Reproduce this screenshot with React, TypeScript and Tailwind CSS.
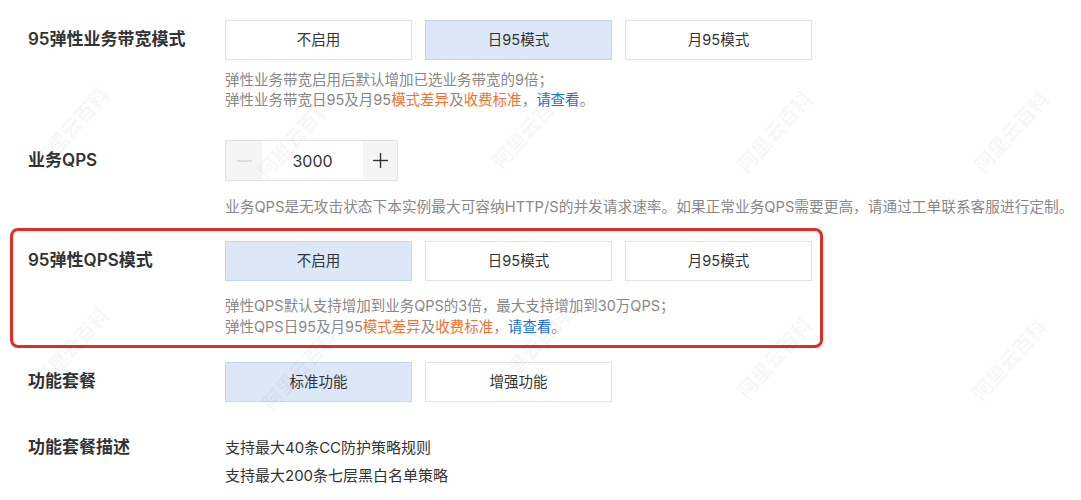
import type { ReactNode } from "react";

const WATERMARKS: [number, number][] = [
  [72, 128],
  [295, 138],
  [530, 128],
  [775, 132],
  [1012, 132],
  [72, 348],
  [300, 370],
  [532, 350],
  [775, 358],
  [1010, 360],
];

function Opt({ children, active }: { children: ReactNode; active?: boolean }) {
  return (
    <div
      className={
        active
          ? "h-10 w-[187px] flex items-center justify-center border border-[#c4d6ef] bg-[#dce8f7] text-[14.5px] text-[#333]"
          : "h-10 w-[187px] flex items-center justify-center border border-[#e3e3e3] bg-white text-[14.5px] text-[#333]"
      }
    >
      {children}
    </div>
  );
}

function Label({ children, tall }: { children: ReactNode; tall?: boolean }) {
  return (
    <div
      className={
        "w-[197px] shrink-0 flex items-center text-[17px] font-semibold text-[#333] " +
        (tall ? "h-[28px]" : "h-10")
      }
    >
      {children}
    </div>
  );
}

const Orange = ({ children }: { children: ReactNode }) => (
  <span className="text-[#ec7430]">{children}</span>
);
const Blue = ({ children }: { children: ReactNode }) => (
  <span className="text-[#1f72cc]">{children}</span>
);

export default function App() {
  return (
    <div className="relative w-[1081px] h-[500px] overflow-hidden bg-white font-['Inter','Noto_Sans_CJK_SC',sans-serif]">
      <div className="pt-[20px] pl-[10px]">
        {/* 带宽模式 */}
        <div className="flex pl-[18px]">
          <Label>95弹性业务带宽模式</Label>
          <div>
            <div className="flex gap-[13px]">
              <Opt>不启用</Opt>
              <Opt active>日95模式</Opt>
              <Opt>月95模式</Opt>
            </div>
            <div className="mt-[10px] text-[14.5px] leading-[20px] text-[#888]">
              <div>弹性业务带宽启用后默认增加已选业务带宽的9倍；</div>
              <div>
                弹性业务带宽日95及月95<Orange>模式差异</Orange>及<Orange>收费标准</Orange>，<Blue>请查看</Blue>。
              </div>
            </div>
          </div>
        </div>

        {/* 业务QPS */}
        <div className="flex pl-[18px] mt-[30px]">
          <div className="w-[197px] shrink-0 h-[41px] flex items-center text-[17px] font-semibold text-[#333]">
            业务QPS
          </div>
          <div>
            <div className="flex h-[41px] w-[173px] border border-[#e2e2e2]">
              <div className="w-[36px] bg-[#f5f5f5] flex items-center justify-center">
                <svg width="15" height="2" viewBox="0 0 15 2">
                  <line x1="0" y1="1" x2="15" y2="1" stroke="#cfcfcf" strokeWidth="1.3" />
                </svg>
              </div>
              <div className="flex-1 flex items-center justify-center text-[16px] text-[#333]">3000</div>
              <div className="w-[34px] bg-[#f5f5f5] flex items-center justify-center">
                <svg width="15" height="15" viewBox="0 0 15 15">
                  <line x1="0" y1="7.5" x2="15" y2="7.5" stroke="#333" strokeWidth="1.4" />
                  <line x1="7.5" y1="0" x2="7.5" y2="15" stroke="#333" strokeWidth="1.4" />
                </svg>
              </div>
            </div>
            <div className="mt-[16px] text-[14.7px] leading-[20px] text-[#888] whitespace-nowrap">
              业务QPS是无攻击状态下本实例最大可容纳HTTP/S的并发请求速率。如果正常业务QPS需要更高，请通过工单联系客服进行定制。
            </div>
          </div>
        </div>

        {/* 95弹性QPS模式 (highlighted) */}
        <div className="mt-[11px] w-[813px] border-[3px] border-[#d9302a] rounded-[8px] pt-[10px] pb-[8px] pl-[15px] flex">
          <Label>95弹性QPS模式</Label>
          <div>
            <div className="flex gap-[13px]">
              <Opt active>不启用</Opt>
              <Opt>日95模式</Opt>
              <Opt>月95模式</Opt>
            </div>
            <div className="mt-[14px] text-[14.5px] leading-[21px] text-[#888]">
              <div>弹性QPS默认支持增加到业务QPS的3倍，最大支持增加到30万QPS；</div>
              <div>
                弹性QPS日95及月95<Orange>模式差异</Orange>及<Orange>收费标准</Orange>，<Blue>请查看</Blue>。
              </div>
            </div>
          </div>
        </div>

        {/* 功能套餐 */}
        <div className="flex pl-[18px] mt-[14px]">
          <Label>功能套餐</Label>
          <div className="flex gap-[13px]">
            <Opt active>标准功能</Opt>
            <Opt>增强功能</Opt>
          </div>
        </div>

        {/* 功能套餐描述 */}
        <div className="flex pl-[18px] mt-[32px]">
          <Label tall>功能套餐描述</Label>
          <div className="text-[15px] leading-[28px] text-[#333]">
            <div>支持最大40条CC防护策略规则</div>
            <div>支持最大200条七层黑白名单策略</div>
          </div>
        </div>
      </div>

      {/* watermark */}
      <div className="pointer-events-none absolute inset-0">
        {WATERMARKS.map(([x, y], i) => (
          <div
            key={i}
            className="absolute -translate-x-1/2 -translate-y-1/2 -rotate-[48deg] whitespace-nowrap text-[20px] font-bold text-black/[0.05]"
            style={{ left: x, top: y }}
          >
            阿里云百科
          </div>
        ))}
      </div>
    </div>
  );
}
